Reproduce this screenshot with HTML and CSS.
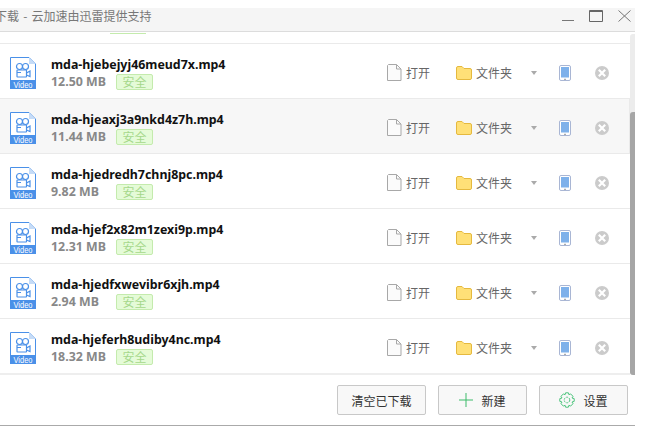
FILE: index.html
```html
<!DOCTYPE html>
<html lang="zh">
<head>
<meta charset="utf-8">
<title>下载</title>
<link rel="stylesheet" href="styles.css">
</head>
<body>
<svg class="defs" width="0" height="0">
  <symbol id="video" viewBox="0 0 26 32">
    <path d="M.5.5H19L25.5 7V31.500H.5Z" fill="#fff" stroke="#4a90e8"/>
    <path d="M19 .5V7H25.500Z" fill="#c6dcf7"/>
    <rect y="23" width="26" height="9" fill="#4a90e8"/>
    <g fill="none" stroke="#4a90e8" stroke-width="1.200">
      <circle cx="9.500" cy="9.500" r="3"/><circle cx="15.500" cy="9.500" r="3"/>
      <rect x="7" y="13" width="9.500" height="7" rx=".5"/>
      <path d="M7 15.500H11M16.500 16L20 14V19.500L16.500 18"/>
    </g>
    <text class="video-label" x="13" y="30.500" text-anchor="middle" textLength="19" lengthAdjust="spacingAndGlyphs">Video</text>
  </symbol>
  <symbol id="doc" viewBox="0 0 15 17">
    <path d="M1.500.5H9.500L14 5V16.500H.5V1.500Z" fill="#fbfbfb" stroke="#a8a8a8"/>
    <path d="M9.500.5V5H14" fill="none" stroke="#a8a8a8"/>
  </symbol>
  <symbol id="folder" viewBox="0 0 16 14">
    <path d="M.5 2A1.500 1.500 0 0 1 2 .5H6L8 2.500H14A1.500 1.500 0 0 1 15.500 4V12A1.500 1.500 0 0 1 14 13.500H2A1.500 1.500 0 0 1 .5 12Z" fill="#ffe077" stroke="#e5b93f"/>
  </symbol>
  <symbol id="phone" viewBox="0 0 12 16">
    <rect x=".5" y=".5" width="11" height="15" rx="1.500" fill="#fff" stroke="#a9b6d4"/>
    <rect x="2" y="2" width="8" height="10.500" fill="#7eb1ea"/>
    <rect x="5" y="13.800" width="2" height="1" fill="#9a9a9a"/>
  </symbol>
  <symbol id="close" viewBox="0 0 14 14">
    <circle cx="7" cy="7" r="7" fill="#cbcbcb"/>
    <path d="M3.800 3.800L10.200 10.200M10.200 3.800L3.800 10.200" stroke="#fff" stroke-width="2.200"/>
  </symbol>
</svg>
<div class="window">
  <header class="titlebar">
    <span class="title">下载 - 云加速由迅雷提供支持</span>
    <div class="winctl">
      <svg class="ctl" width="12" height="12" viewBox="0 0 12 12"><path d="M0 10.500H12" stroke="#777"/></svg>
      <svg class="ctl" width="14" height="12" viewBox="0 0 14 12"><path d="M.5.500H13.500V11.500H.5Z M.5 1.500H13.500" fill="none" stroke="#666"/></svg>
      <svg class="ctl" width="13" height="12" viewBox="0 0 13 12"><path d="M.5.500L12.500 11.500M12.500.500L.5 11.500" stroke="#777"/></svg>
    </div>
  </header>
  <div class="body">
    <div class="list">
      <div class="stub"><span class="stub-badge"></span></div>

      <div class="row">
        <svg class="ic-video"><use href="#video"/></svg>
        <div class="info"><div class="name">mda-hjebejyj46meud7x.mp4</div><div class="meta"><span class="size">12.50 MB</span><span class="badge">安全</span></div></div>
        <div class="actions"><svg class="ic-doc"><use href="#doc"/></svg><span class="open">打开</span><svg class="ic-folder"><use href="#folder"/></svg><span class="dir">文件夹</span><span class="caret"></span><svg class="ic-phone"><use href="#phone"/></svg><svg class="ic-close"><use href="#close"/></svg></div>
      </div>
      <div class="row row-hover">
        <svg class="ic-video"><use href="#video"/></svg>
        <div class="info"><div class="name">mda-hjeaxj3a9nkd4z7h.mp4</div><div class="meta"><span class="size">11.44 MB</span><span class="badge">安全</span></div></div>
        <div class="actions"><svg class="ic-doc"><use href="#doc"/></svg><span class="open">打开</span><svg class="ic-folder"><use href="#folder"/></svg><span class="dir">文件夹</span><span class="caret"></span><svg class="ic-phone"><use href="#phone"/></svg><svg class="ic-close"><use href="#close"/></svg></div>
      </div>
      <div class="row">
        <svg class="ic-video"><use href="#video"/></svg>
        <div class="info"><div class="name">mda-hjedredh7chnj8pc.mp4</div><div class="meta"><span class="size">9.82 MB</span><span class="badge">安全</span></div></div>
        <div class="actions"><svg class="ic-doc"><use href="#doc"/></svg><span class="open">打开</span><svg class="ic-folder"><use href="#folder"/></svg><span class="dir">文件夹</span><span class="caret"></span><svg class="ic-phone"><use href="#phone"/></svg><svg class="ic-close"><use href="#close"/></svg></div>
      </div>
      <div class="row">
        <svg class="ic-video"><use href="#video"/></svg>
        <div class="info"><div class="name">mda-hjef2x82m1zexi9p.mp4</div><div class="meta"><span class="size">12.31 MB</span><span class="badge">安全</span></div></div>
        <div class="actions"><svg class="ic-doc"><use href="#doc"/></svg><span class="open">打开</span><svg class="ic-folder"><use href="#folder"/></svg><span class="dir">文件夹</span><span class="caret"></span><svg class="ic-phone"><use href="#phone"/></svg><svg class="ic-close"><use href="#close"/></svg></div>
      </div>
      <div class="row">
        <svg class="ic-video"><use href="#video"/></svg>
        <div class="info"><div class="name">mda-hjedfxwevibr6xjh.mp4</div><div class="meta"><span class="size">2.94 MB</span><span class="badge">安全</span></div></div>
        <div class="actions"><svg class="ic-doc"><use href="#doc"/></svg><span class="open">打开</span><svg class="ic-folder"><use href="#folder"/></svg><span class="dir">文件夹</span><span class="caret"></span><svg class="ic-phone"><use href="#phone"/></svg><svg class="ic-close"><use href="#close"/></svg></div>
      </div>
      <div class="row">
        <svg class="ic-video"><use href="#video"/></svg>
        <div class="info"><div class="name">mda-hjeferh8udiby4nc.mp4</div><div class="meta"><span class="size">18.32 MB</span><span class="badge">安全</span></div></div>
        <div class="actions"><svg class="ic-doc"><use href="#doc"/></svg><span class="open">打开</span><svg class="ic-folder"><use href="#folder"/></svg><span class="dir">文件夹</span><span class="caret"></span><svg class="ic-phone"><use href="#phone"/></svg><svg class="ic-close"><use href="#close"/></svg></div>
      </div>
    </div>
    <div class="scrollbar"><div class="thumb"></div></div>
  </div>
  <footer class="footer">
    <button class="btn">清空已下载</button>
    <button class="btn"><svg class="btn-ic" width="14" height="14" viewBox="0 0 14 14"><path d="M7 0V14M0 7H14" stroke="#3dbb6b"/></svg><span class="btn-label">新建</span></button>
    <button class="btn"><svg class="btn-ic" width="16" height="16" viewBox="0 0 16 16"><g fill="none" stroke="#4cc47c"><circle cx="8" cy="8" r="2.800" stroke-dasharray="2 1"/><path d="M6.600 .8H9.400L9.900 2.700L11.600 1.900L14 4.300L13 6L15.200 6.600V9.400L13 10L14 11.700L11.600 14.100L9.900 13.300L9.400 15.200H6.600L6.100 13.300L4.400 14.100L2 11.700L3 10L.8 9.400V6.600L3 6L2 4.300L4.400 1.900L6.100 2.700Z"/></g></svg><span class="btn-label">设置</span></button>
  </footer>
</div>
</body>
</html>
```
FILE: styles.css
```css
* { box-sizing: border-box; }
html, body { margin: 0; padding: 0; background: #fff; overflow: hidden; }
body { width: 652px; height: 426px; padding-top: 8px; font-family: "Noto Sans CJK SC", "Noto Sans", sans-serif; }
.defs { display: block; height: 0; }
.window { width: 635px; height: 418px; display: flex; flex-direction: column; border-bottom: 1px solid #aaa; overflow: hidden; }

.titlebar { height: 24px; flex: none; display: flex; align-items: flex-start; justify-content: space-between; background: #f5f5f5; border-bottom: 1px solid #dcdcdc; padding: 2px 4px 0 0; }
.title { margin-left: -5px; font-size: 12px; line-height: 12px; color: #777; white-space: nowrap; word-spacing: 1.5px; }
.winctl { display: flex; align-items: flex-start; gap: 15px; height: 14px; }
.ctl { display: block; }

.body { flex: none; height: 343px; display: flex; }
.list { width: 630px; flex: none; display: flex; flex-direction: column; padding-top: 1px; }
.stub { height: 11px; flex: none; border-bottom: 1px solid #eaeaea; }
.stub-badge { display: block; width: 36px; height: 1px; margin-left: 110px; background: #c4ebad; }
.row { height: 55px; flex: none; display: flex; align-items: center; padding-left: 10px; border-bottom: 1px solid #eaeaea; }
.row:last-child { height: 56px; border-bottom: 2px solid #eee; }
.row-hover { background: #f7f7f7; border-right: 1px solid #eaeaea; }

.ic-video { width: 26px; height: 32px; flex: none; margin-top: 4px; }
.video-label { font-family: "Liberation Sans", sans-serif; font-size: 8.5px; fill: #fff; }
.info { width: 325px; margin-left: 15px; padding-top: 4px; flex: none; }
.name { font-family: "Noto Sans", sans-serif; font-size: 12.4px; font-weight: 700; line-height: 18px; color: #111; white-space: nowrap; }
.meta { display: flex; align-items: center; height: 18px; margin-top: -1px; }
.size { font-family: "Noto Sans", sans-serif; font-size: 12.4px; font-weight: 700; color: #888; white-space: nowrap; width: 65px; }
.badge { width: 37px; height: 16px; background: #e5fbd8; border: 1px solid #c4ebad; border-radius: 2px; font-size: 12px; line-height: 14px; color: #a6d88b; text-align: center; }

.actions { display: flex; align-items: center; padding-top: 3px; }
.ic-doc { width: 15px; height: 17px; flex: none; margin-left: 11px; }
.open { margin-left: 4px; width: 25px; font-size: 12px; color: #666; white-space: nowrap; }
.ic-folder { width: 16px; height: 14px; flex: none; margin-left: 25px; }
.dir { margin-left: 4px; width: 37px; font-size: 12px; color: #666; white-space: nowrap; }
.caret { width: 0; height: 0; flex: none; margin-left: 18px; border: 3.5px solid transparent; border-top: 4px solid #aaa; border-bottom: 0; }
.ic-phone { width: 12px; height: 16px; flex: none; margin-left: 22px; }
.ic-close { width: 14px; height: 14px; flex: none; margin-left: 24px; }

.scrollbar { width: 5px; flex: none; margin-top: 2px; background: #ececec; border-radius: 3px 0 0 3px; display: flex; flex-direction: column; justify-content: flex-end; }
.thumb { height: 263px; background: #a6a6a6; border-radius: 3px 0 0 3px; }

.footer { flex: 1; display: flex; gap: 12px; padding: 10px 7px 0 337px; }
.btn { width: 89px; height: 30px; display: flex; align-items: center; justify-content: center; padding: 0; border: 1px solid #c8c8c8; border-radius: 2px; background: #f8f8f8; font: 12px "Noto Sans CJK SC", sans-serif; color: #333; }
.btn-ic { flex: none; }
.btn-label { margin-left: 8px; }
```
